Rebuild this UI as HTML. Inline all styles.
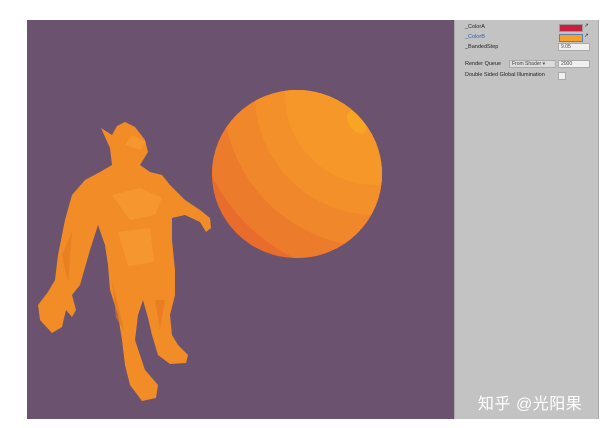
<!DOCTYPE html>
<html><head><meta charset="utf-8"><style>
body{margin:0;width:603px;height:428px;background:#fff;position:relative;overflow:hidden;font-family:"Liberation Sans",sans-serif}
.view{position:absolute;left:27px;top:20px;width:427px;height:399px;background:#6b536f}
.panel{position:absolute;left:454px;top:20px;width:143px;height:399px;background:#c3c3c3;border-left:1px solid #a8a8a8;border-right:1px solid #a8a8a8}
.t{position:absolute;font-size:5.5px;color:#222;white-space:nowrap}
.box{position:absolute;background:#f0f0f0;border:1px solid #aaa;font-size:5px;color:#444;padding-left:2px;box-sizing:border-box;line-height:7px}
.wm{position:absolute;left:478px;top:390px;font-family:"Liberation Sans","Noto Sans CJK SC",sans-serif;font-size:16px;color:#fff;letter-spacing:0.5px}
</style></head><body>
<div class="view"></div>
<svg style="position:absolute;left:0;top:0" width="603" height="428">
<defs><clipPath id="s"><ellipse cx="297" cy="174" rx="85" ry="84"/></clipPath></defs>
<g clip-path="url(#s)">
<rect x="200" y="80" width="200" height="190" fill="#d8482f"/>
<circle cx="375" cy="95" r="240" fill="#e25e2e"/>
<circle cx="375" cy="95" r="212" fill="#e86d2d"/>
<circle cx="375" cy="95" r="182" fill="#ec7b2c"/>
<circle cx="375" cy="95" r="152" fill="#f0872b"/>
<circle cx="375" cy="95" r="120" fill="#f3902a"/>
<circle cx="375" cy="95" r="90" fill="#f6972a"/>
<ellipse cx="357" cy="122" rx="8" ry="13" transform="rotate(-35 357 122)" fill="#f9a524"/>
</g>
<path d="M101,128 L112,135 L117,126 L125,122 L135,127 L145,140 L148,152 L140,165 L150,172 L162,175 L170,185 L185,200 L200,210 L210,218 L211,228 L206,232 L200,222 L185,215 L172,218 L172,240 L175,270 L175,295 L170,315 L172,335 L178,345 L188,355 L186,363 L170,364 L158,355 L152,335 L148,318 L143,300 L138,315 L135,340 L145,370 L158,385 L156,398 L142,401 L130,385 L125,365 L122,340 L118,315 L110,290 L108,265 L105,245 L98,225 L90,250 L80,285 L72,295 L76,310 L72,317 L66,310 L62,327 L52,333 L40,320 L38,305 L48,292 L55,280 L58,255 L65,220 L72,195 L85,180 L100,172 L112,165 L110,148 Z" fill="#f28c26"/>
<path d="M112,195 L140,188 L162,198 L155,215 L130,220 Z M118,232 L150,228 L154,262 L128,266 Z M132,135 L146,142 L140,150 L125,145 Z" fill="#f7a035" opacity="0.55"/>
<path d="M62,255 L72,232 L68,282 Z M112,280 L124,330 L116,318 Z M155,300 L165,300 L160,330 Z" fill="#e27620" opacity="0.6"/>
</svg>
<div class="panel"></div>
<div class="t" style="left:465px;top:24px">_ColorA</div>
<div style="position:absolute;left:559px;top:24px;width:22px;height:6px;background:#c8203d;border:1px solid #999"></div>
<div class="t" style="left:584px;top:23px">&#8599;</div>
<div class="t" style="left:465px;top:34px;color:#2a5fb0">_ColorB</div>
<div style="position:absolute;left:559px;top:34px;width:22px;height:6px;background:#f7a02a;border:1px solid #5a7fb8"></div>
<div class="t" style="left:584px;top:33px">&#8599;</div>
<div class="t" style="left:465px;top:44px">_BandedStep</div>
<div class="box" style="left:558px;top:43px;width:32px;height:8px">9.05</div>
<div class="t" style="left:465px;top:61px">Render Queue</div>
<div class="box" style="left:509px;top:60px;width:47px;height:8px;background:#dcdcdc">From Shader &#9662;</div>
<div class="box" style="left:558px;top:60px;width:32px;height:8px">2000</div>
<div class="t" style="left:465px;top:72px">Double Sided Global Illumination</div>
<div style="position:absolute;left:558px;top:72px;width:6px;height:6px;background:#f0f0f0;border:1px solid #aaa"></div>
<div class="wm">知乎 @光阳果</div>
</body></html>
